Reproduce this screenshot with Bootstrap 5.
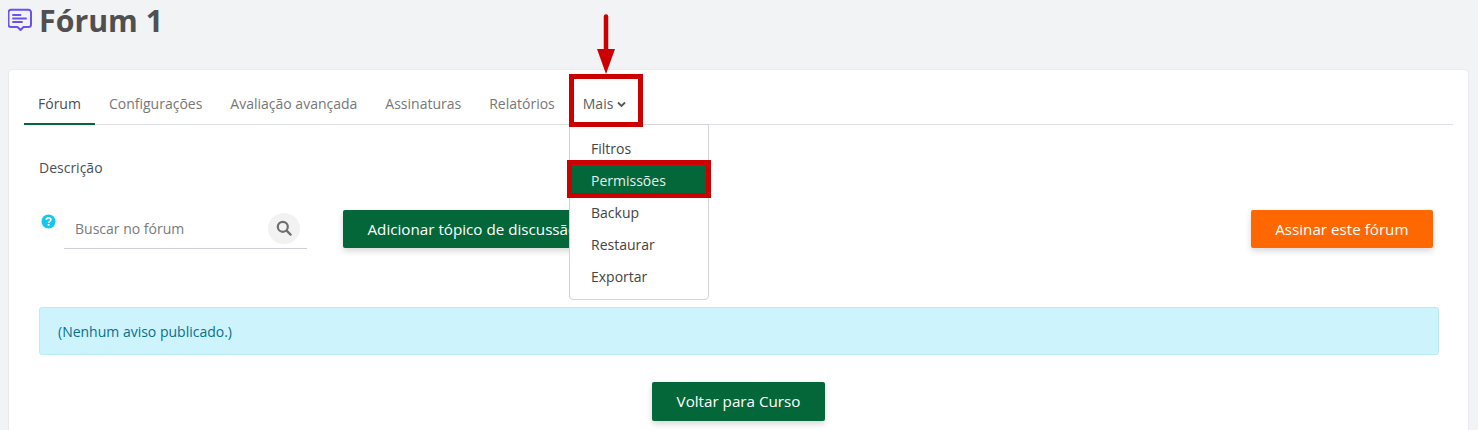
<!DOCTYPE html>
<html lang="pt">
<head>
<meta charset="utf-8">
<title>Fórum 1</title>
<link href="https://cdn.jsdelivr.net/npm/bootstrap@5.3.0/dist/css/bootstrap.min.css" rel="stylesheet">
<style>
html,body{height:430px;overflow:hidden}
body{background:#f2f3f5;font-family:"Open Sans",sans-serif;font-size:14px;color:#495057;padding:0 9px 0 8px;position:relative}
.page-head{height:69px;gap:6px;padding-top:1px}
.page-head h1{font-size:30.3px;font-weight:700;line-height:40px;margin:0;color:#505050}
.head-icon{margin-top:7px}
.main-card{background:#fff;border:1px solid #e9ebee;border-radius:5px 5px 0 0;height:362px;padding:0 15px}
.tabs-row{height:55px;border-bottom:1px solid #dcdfe3;flex-wrap:nowrap}
.tabs-row .nav-link{color:#777;font-size:14px;padding:0 14px;height:55px;line-height:67px;border-bottom:2px solid transparent;margin-bottom:-1px}
.tabs-row .nav-link.active{color:#495057;border-bottom-color:#03673a}
.tabs-row .nav-link.more-link{color:#5c5c5c;padding:0 13px 0 14px}
.chev{margin-left:4px;vertical-align:1px}
.descr{padding:33px 15px 0;line-height:19px;height:85px;color:#495057}
.tool-row{padding:0 20px 0 17px;height:58px}
.help-dot{margin-top:4px;margin-right:8px;flex:none}
.search-wrap{width:243px;height:39px;border-bottom:1px solid #cfd0d8;padding:0 7px 2px 11px;color:#777b80;margin-right:36px}
.search-btn{width:32px;height:31px;border-radius:50%;background:#f2f2f2}
.act-btn{font-size:15.2px;border:0;border-radius:2px;height:38px;padding:0 24.5px;color:#fff;box-shadow:0 3px 6px rgba(0,0,0,.16)}
.btn-green{background:#03673a}
.btn-green:hover{background:#03673a;color:#fff}
.btn-orange{background:#ff6800}
.btn-orange:hover{background:#ff6800;color:#fff}
.add-btn{width:246px;overflow:hidden;white-space:nowrap;text-align:left;padding-right:0}
.notice{margin:39px 14px 0 15px;height:48px;background:#cdf4fc;border:1px solid #b9ecf7;border-radius:3px;color:#086f8f;padding:0 18px;line-height:48px}
.back-row{margin-top:27px}
.back-btn{height:39px}
.menu-pop{position:absolute;left:569px;top:124px;width:140px;height:176px;margin:0;padding:8px 0;border:1px solid #d2d4d7;border-radius:0 0 4px 4px;display:block;z-index:5;font-size:14px;--bs-dropdown-min-width:0}
.menu-pop .dropdown-item{height:32px;line-height:32px;padding:0 21px;color:#444}
.menu-pop .dropdown-item.active{background:#03673a;color:#e6f2ec}
.red-box{position:absolute;border:5px solid #cc0000;z-index:6;pointer-events:none}
.box-more{left:569px;top:74px;width:74px;height:53px}
.box-perm{left:567px;top:160px;width:144px;height:38px}
.red-arrow{position:absolute;left:596px;top:14px;z-index:6}
</style>
</head>
<body>
<div class="page-head d-flex align-items-start">
  <svg class="head-icon" width="25" height="26" viewBox="0 0 25 26" fill="none" stroke="#6a52f0" stroke-width="2" stroke-linejoin="round" stroke-linecap="round"><path d="M3.5 1.800h17a2.500 2.500 0 0 1 2.500 2.500v12.200a2.500 2.500 0 0 1-2.500 2.500h-5l-3 3-3-3h-6.500a2.500 2.500 0 0 1-2.500-2.500v-12.200a2.500 2.500 0 0 1 2.500-2.500z"/><path d="M5 7h7.500M5 10.500h13M5 14h9" stroke-width="1.900"/></svg>
  <h1>Fórum 1</h1>
</div>
<div class="main-card">
  <ul class="nav tabs-row">
    <li class="nav-item"><a class="nav-link active" href="#">Fórum</a></li>
    <li class="nav-item"><a class="nav-link" href="#">Configurações</a></li>
    <li class="nav-item"><a class="nav-link" href="#">Avaliação avançada</a></li>
    <li class="nav-item"><a class="nav-link" href="#">Assinaturas</a></li>
    <li class="nav-item"><a class="nav-link" href="#">Relatórios</a></li>
    <li class="nav-item"><a class="nav-link more-link" href="#">Mais<svg class="chev" width="9" height="7" viewBox="0 0 9 7" fill="none" stroke="#555" stroke-width="1.800"><path d="M1 1.500l3.500 3.500 3.500-3.500"/></svg></a></li>
  </ul>
  <div class="descr">Descrição</div>
  <div class="tool-row d-flex align-items-start">
    <svg class="help-dot" width="15" height="15" viewBox="0 0 15 15"><circle cx="7.500" cy="7.500" r="7" fill="#12c6ee"/><path d="M5.200 5.800c.2-1.300 1.200-2 2.400-2 1.300 0 2.300.8 2.300 1.900 0 1.700-2.300 1.700-2.300 3.200" fill="none" stroke="#fff" stroke-width="1.700"/><rect x="6.700" y="9.900" width="1.800" height="1.800" fill="#fff"/></svg>
    <div class="search-wrap d-flex align-items-center justify-content-between">
      <span>Buscar no fórum</span>
      <span class="search-btn d-flex align-items-center justify-content-center">
        <svg width="16" height="16" viewBox="0 0 16 16" fill="none" stroke="#6e6e6e" stroke-width="2.200" stroke-linecap="round"><circle cx="6.800" cy="6.800" r="5"/><path d="M10.600 10.600l4 4"/></svg>
      </span>
    </div>
    <button class="btn act-btn btn-green add-btn" type="button">Adicionar tópico de discussão</button>
    <button class="btn act-btn btn-orange ms-auto" type="button">Assinar este fórum</button>
  </div>
  <div class="notice">(Nenhum aviso publicado.)</div>
  <div class="back-row d-flex justify-content-center">
    <button class="btn act-btn btn-green back-btn" type="button">Voltar para Curso</button>
  </div>
</div>
<ul class="dropdown-menu menu-pop list-unstyled">
  <li><a class="dropdown-item" href="#">Filtros</a></li>
  <li><a class="dropdown-item active" href="#">Permissões</a></li>
  <li><a class="dropdown-item" href="#">Backup</a></li>
  <li><a class="dropdown-item" href="#">Restaurar</a></li>
  <li><a class="dropdown-item" href="#">Exportar</a></li>
</ul>
<div class="red-box box-more"></div>
<div class="red-box box-perm"></div>
<svg class="red-arrow" width="20" height="60" viewBox="0 0 20 60"><path d="M10 2.500V35" stroke="#cc0000" stroke-width="4.500" stroke-linecap="round"/><path d="M1 35h18l-9 25z" fill="#cc0000"/></svg>
<script src="https://cdn.jsdelivr.net/npm/bootstrap@5.3.0/dist/js/bootstrap.bundle.min.js"></script>
</body>
</html>
